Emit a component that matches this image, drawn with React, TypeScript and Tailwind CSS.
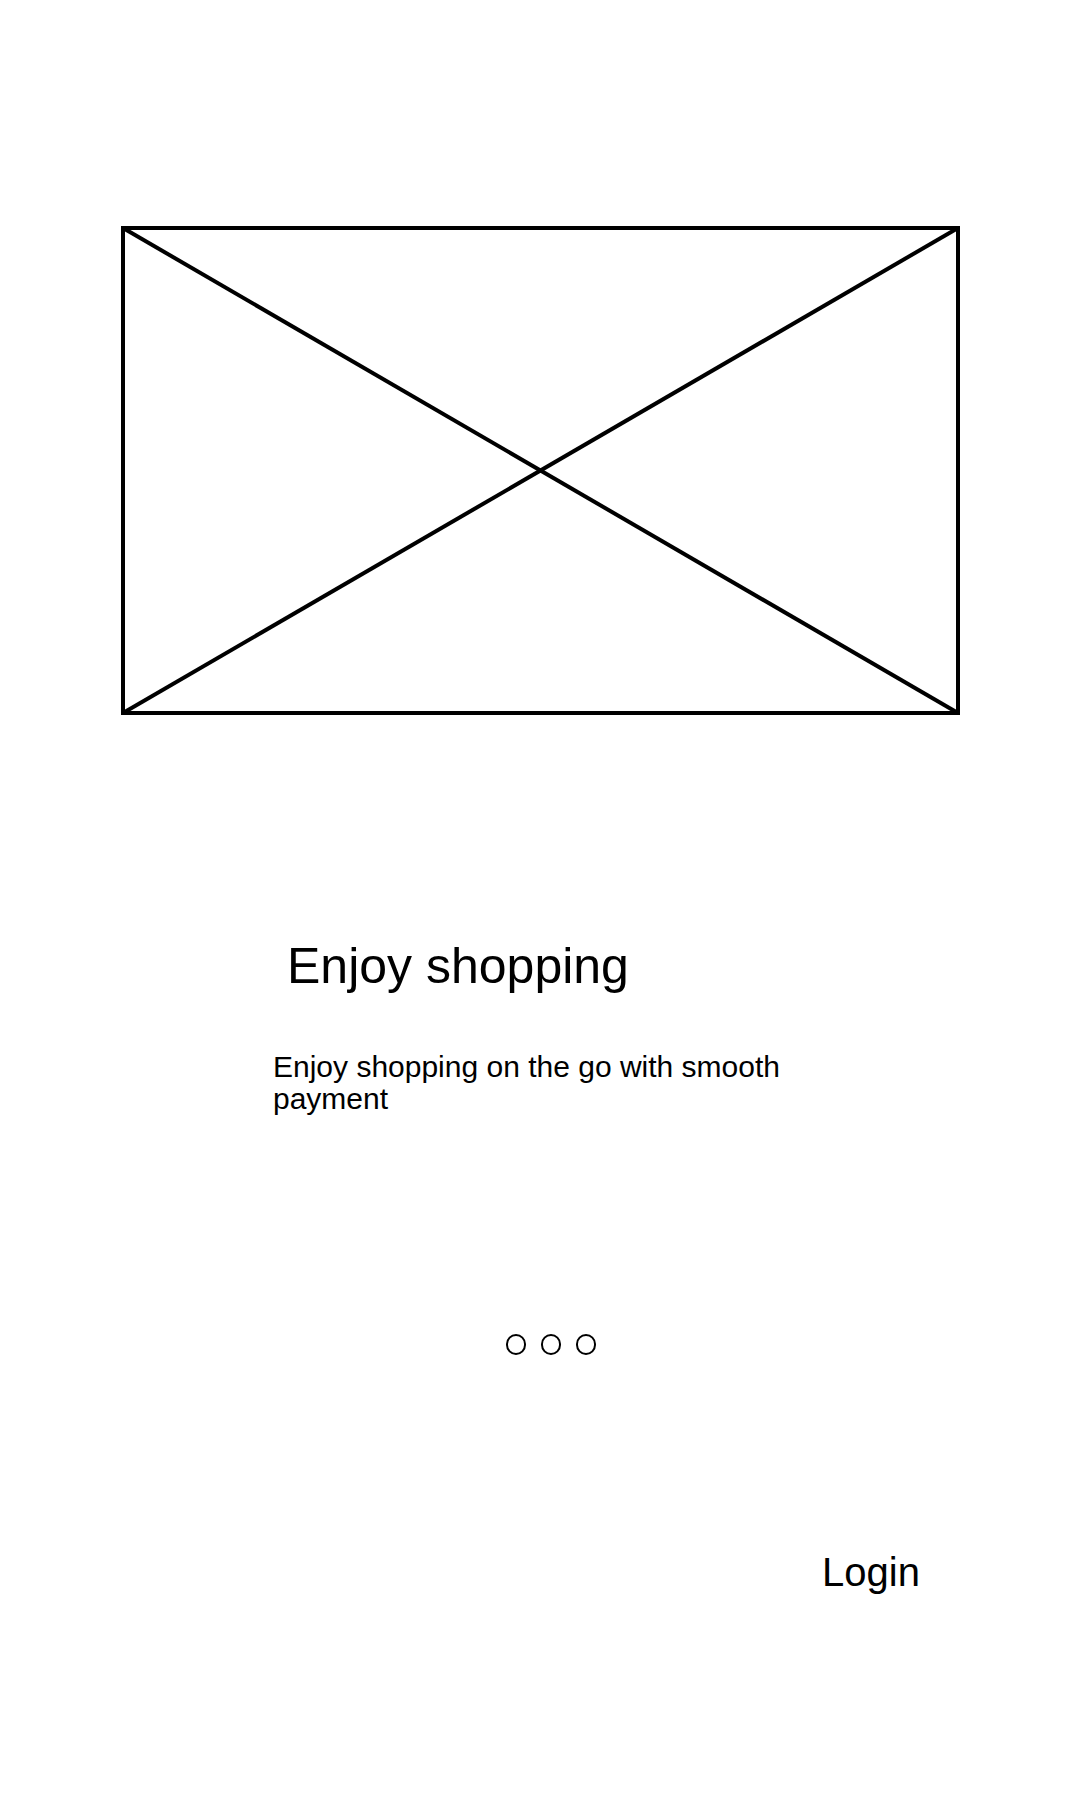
export default function App() {
  return (
    <div
      className="w-[1080px] h-[1800px] bg-white text-black flex flex-col"
      style={{ fontFamily: '"Liberation Sans", Arial, sans-serif' }}
    >
      <div className="mt-[226px] ml-[121px] w-[839px] h-[489px]">
        <svg width="839" height="489" viewBox="0 0 839 489" fill="none">
          <rect x="2" y="2" width="835" height="485" stroke="black" strokeWidth="4" />
          <line x1="2" y1="2" x2="837" y2="487" stroke="black" strokeWidth="4" />
          <line x1="837" y1="2" x2="2" y2="487" stroke="black" strokeWidth="4" />
        </svg>
      </div>

      <h1 className="mt-[226px] ml-[287px] text-[50px] leading-none">Enjoy shopping</h1>

      <p className="mt-[60px] ml-[273px] w-[540px] text-[30px] leading-[32px]">
        Enjoy shopping on the go with smooth payment
      </p>

      <div className="mt-[219px] ml-[506px] flex gap-[15px]">
        <span className="w-[20px] h-[21px] rounded-full border-[2.5px] border-black" />
        <span className="w-[20px] h-[21px] rounded-full border-[2.5px] border-black" />
        <span className="w-[20px] h-[21px] rounded-full border-[2.5px] border-black" />
      </div>

      <button className="mt-[197px] ml-[822px] self-start text-[40px] leading-none">Login</button>
    </div>
  );
}
